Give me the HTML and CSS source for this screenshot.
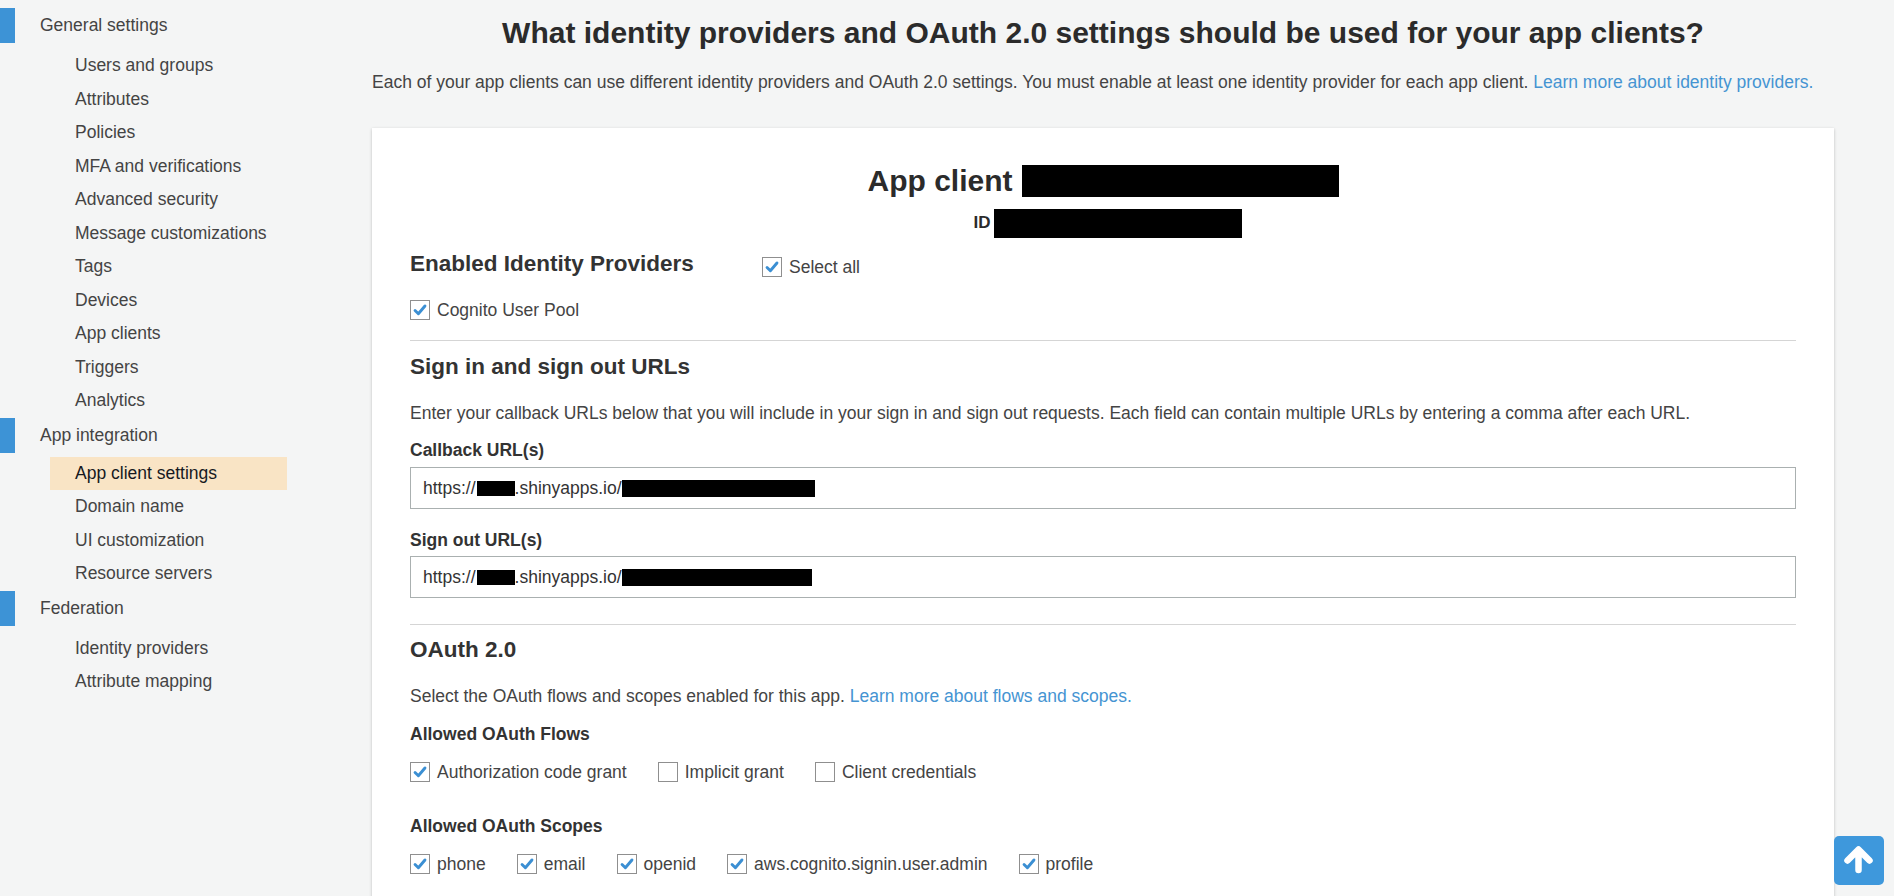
FILE: index.html
```html
<!DOCTYPE html>
<html lang="en">
<head>
<meta charset="utf-8">
<title>App client settings</title>
<link rel="stylesheet" href="styles.css">
</head>
<body>
<div class="app">
  <nav class="sidebar">
    <div class="group group-general">
      <div class="group-head"><span class="bar"></span><span>General settings</span></div>
      <ul class="items">
        <li class="item">Users and groups</li>
        <li class="item">Attributes</li>
        <li class="item">Policies</li>
        <li class="item">MFA and verifications</li>
        <li class="item">Advanced security</li>
        <li class="item">Message customizations</li>
        <li class="item">Tags</li>
        <li class="item">Devices</li>
        <li class="item">App clients</li>
        <li class="item">Triggers</li>
        <li class="item">Analytics</li>
      </ul>
    </div>
    <div class="group group-integration">
      <div class="group-head"><span class="bar"></span><span>App integration</span></div>
      <ul class="items">
        <li class="item active">App client settings</li>
        <li class="item">Domain name</li>
        <li class="item">UI customization</li>
        <li class="item">Resource servers</li>
      </ul>
    </div>
    <div class="group group-federation">
      <div class="group-head"><span class="bar"></span><span>Federation</span></div>
      <ul class="items">
        <li class="item">Identity providers</li>
        <li class="item">Attribute mapping</li>
      </ul>
    </div>
  </nav>

  <main class="main">
    <h1 class="page-title">What identity providers and OAuth 2.0 settings should be used for your app clients?</h1>
    <p class="intro">Each of your app clients can use different identity providers and OAuth 2.0 settings. You must enable at least one identity provider for each app client. <a class="link" href="#">Learn more about identity providers.</a></p>

    <section class="card">
      <h2 class="client-title">App client <span class="redact redact-title"></span></h2>
      <div class="client-id"><span class="id-label">ID</span><span class="redact redact-id"></span></div>

      <div class="providers-row">
        <h3 class="section-title providers-title">Enabled Identity Providers</h3>
        <label class="check select-all"><span class="box"><svg viewBox="0 0 20 20"><path d="M4.5 10.5 L8.2 14.2 L15.5 5.5" /></svg></span>Select all</label>
      </div>
      <div class="check-row cognito-row">
        <label class="check"><span class="box"><svg viewBox="0 0 20 20"><path d="M4.5 10.5 L8.2 14.2 L15.5 5.5" /></svg></span>Cognito User Pool</label>
      </div>

      <hr class="divider divider-1">

      <h3 class="section-title urls-title">Sign in and sign out URLs</h3>
      <p class="text urls-desc">Enter your callback URLs below that you will include in your sign in and sign out requests. Each field can contain multiple URLs by entering a comma after each URL.</p>

      <div class="field-label callback-label">Callback URL(s)</div>
      <div class="input callback-input">https://<span class="redact redact-host"></span>.shinyapps.io/<span class="redact redact-path"></span></div>

      <div class="field-label signout-label">Sign out URL(s)</div>
      <div class="input signout-input">https://<span class="redact redact-host"></span>.shinyapps.io/<span class="redact redact-path2"></span></div>

      <hr class="divider divider-2">

      <h3 class="section-title oauth-title">OAuth 2.0</h3>
      <p class="text oauth-desc">Select the OAuth flows and scopes enabled for this app. <a class="link" href="#">Learn more about flows and scopes.</a></p>

      <div class="field-label flows-label">Allowed OAuth Flows</div>
      <div class="check-row flows-row">
        <label class="check"><span class="box"><svg viewBox="0 0 20 20"><path d="M4.5 10.5 L8.2 14.2 L15.5 5.5" /></svg></span>Authorization code grant</label>
        <label class="check"><span class="box"></span>Implicit grant</label>
        <label class="check"><span class="box"></span>Client credentials</label>
      </div>

      <div class="field-label scopes-label">Allowed OAuth Scopes</div>
      <div class="check-row scopes-row">
        <label class="check"><span class="box"><svg viewBox="0 0 20 20"><path d="M4.5 10.5 L8.2 14.2 L15.5 5.5" /></svg></span>phone</label>
        <label class="check"><span class="box"><svg viewBox="0 0 20 20"><path d="M4.5 10.5 L8.2 14.2 L15.5 5.5" /></svg></span>email</label>
        <label class="check"><span class="box"><svg viewBox="0 0 20 20"><path d="M4.5 10.5 L8.2 14.2 L15.5 5.5" /></svg></span>openid</label>
        <label class="check"><span class="box"><svg viewBox="0 0 20 20"><path d="M4.5 10.5 L8.2 14.2 L15.5 5.5" /></svg></span>aws.cognito.signin.user.admin</label>
        <label class="check"><span class="box"><svg viewBox="0 0 20 20"><path d="M4.5 10.5 L8.2 14.2 L15.5 5.5" /></svg></span>profile</label>
      </div>
    </section>
  </main>

  <button class="to-top" aria-label="Back to top">
    <svg viewBox="0 0 50 49"><path d="M13.5 24.5 L24.5 13.5 L35.5 24.5 M24.5 14.5 L24.5 34" /></svg>
  </button>
</div>
</body>
</html>
```

FILE: styles.css
```css
* { box-sizing: border-box; }

html, body {
  margin: 0;
  padding: 0;
}

body {
  background: #f4f5f5;
  font-family: "Liberation Sans", Arial, sans-serif;
  font-size: 17.5px;
  color: #444;
}

.app {
  display: flex;
  height: 100vh;
  overflow: hidden;
}

/* Sidebar */
.sidebar {
  width: 300px;
  flex: none;
  padding-top: 8px;
}

.group-head {
  display: flex;
  align-items: center;
  height: 35px;
  gap: 25px;
  color: #444;
}

.bar {
  width: 15px;
  height: 35px;
  background: #3d93d6;
}

.items {
  list-style: none;
  margin: 6px 0 0 0;
  padding: 0;
}

.group-integration .items {
  margin-top: 4px;
}

.group-federation .items {
  margin-top: 6px;
}

.item {
  margin-left: 50px;
  width: 237px;
  height: 33.5px;
  line-height: 33.5px;
  padding-left: 25px;
  color: #444;
}

.item.active {
  background: #f9e4c5;
  color: #16191f;
}

/* Main */
.main {
  flex: 1;
  padding: 14px 60px 0 72px;
  min-width: 0;
}

.page-title {
  margin: 0;
  font-size: 30px;
  line-height: 38px;
  font-weight: bold;
  text-align: center;
  color: #2b2b2b;
}

.intro {
  margin: 18px 0 0 0;
  line-height: 24px;
  color: #444;
}

.link {
  color: #4594d2;
  text-decoration: none;
}

.card {
  margin-top: 34px;
  background: #fff;
  box-shadow: 0 1px 3px rgba(0, 0, 0, 0.22);
  padding: 35px 38px 60px 38px;
}

.client-title {
  margin: 0;
  font-size: 30px;
  line-height: 36px;
  font-weight: bold;
  text-align: center;
  color: #2b2b2b;
  display: flex;
  justify-content: center;
  align-items: center;
  gap: 9px;
}

.redact {
  display: inline-block;
  background: #000;
  vertical-align: middle;
}

.redact-title {
  width: 317px;
  height: 32px;
}

.client-id {
  margin-top: 9px;
  height: 30px;
  display: flex;
  justify-content: center;
  align-items: center;
  gap: 3px;
  padding-left: 9px;
}

.id-label {
  font-weight: bold;
  color: #2b2b2b;
  font-size: 17px;
}

.redact-id {
  width: 248px;
  height: 29px;
}

.providers-row {
  margin-top: 11px;
  height: 30px;
  display: flex;
  align-items: center;
}

.section-title {
  margin: 0;
  font-size: 22.5px;
  line-height: 30px;
  font-weight: bold;
  color: #333;
}

.providers-title {
  width: 352px;
}

.select-all {
  margin-top: 5px;
}

.check-row {
  display: flex;
  align-items: center;
  height: 30px;
}

.check {
  display: flex;
  align-items: center;
  gap: 7px;
  margin-right: 31px;
  color: #444;
  line-height: 24px;
}

.box {
  width: 20px;
  height: 20px;
  border: 1px solid #8f8f8f;
  background: #fff;
  display: inline-flex;
  flex: none;
}

.box svg {
  width: 18px;
  height: 18px;
}

.box path {
  fill: none;
  stroke: #3b8fd3;
  stroke-width: 3.2;
  stroke-linecap: round;
  stroke-linejoin: round;
}

.cognito-row {
  margin-top: 16px;
}

.divider {
  border: 0;
  border-top: 1px solid #d5d5d5;
  margin: 0;
}

.divider-1 {
  margin-top: 15px;
}

.urls-title {
  margin-top: 11px;
}

.text {
  margin: 0;
  line-height: 24px;
  color: #444;
}

.urls-desc {
  margin-top: 19px;
}

.field-label {
  font-weight: bold;
  line-height: 24px;
  color: #333;
}

.callback-label {
  margin-top: 13px;
}

.input {
  margin-top: 5px;
  height: 42px;
  border: 1px solid #aab0b0;
  padding: 0 12px;
  display: flex;
  align-items: center;
  color: #333;
  white-space: pre;
}

.redact-host {
  width: 38px;
  height: 15px;
  margin-left: 1px;
}

.redact-path {
  width: 193px;
  height: 17px;
}

.redact-path2 {
  width: 190px;
  height: 17px;
}

.signout-label {
  margin-top: 19px;
}

.signout-input {
  margin-top: 4px;
}

.divider-2 {
  margin-top: 26px;
}

.oauth-title {
  margin-top: 10px;
}

.oauth-desc {
  margin-top: 19px;
}

.flows-label {
  margin-top: 14px;
}

.flows-row {
  margin-top: 11px;
}

.scopes-label {
  margin-top: 27px;
}

.scopes-row {
  margin-top: 11px;
}

/* Back to top */
.to-top {
  position: fixed;
  right: 10px;
  bottom: 11px;
  width: 50px;
  height: 49px;
  border: 0;
  padding: 0;
  border-radius: 5px;
  background: #3e98dc;
  cursor: pointer;
}

.to-top svg {
  width: 50px;
  height: 49px;
  display: block;
}

.to-top path {
  fill: none;
  stroke: #fff;
  stroke-width: 6.5;
  stroke-linecap: round;
  stroke-linejoin: round;
}
```
